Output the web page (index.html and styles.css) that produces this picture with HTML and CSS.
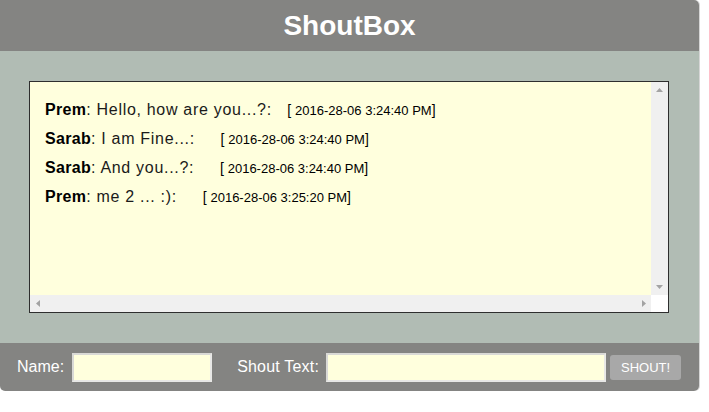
FILE: index.html
```html
<!DOCTYPE html>
<html>
<head>
<meta charset="utf-8">
<title>ShoutBox</title>
<link rel="stylesheet" href="styles.css">
</head>
<body>
<div class="shoutbox">
  <header class="sb-header"><h1>ShoutBox</h1></header>
  <main class="sb-body">
    <div class="sb-log">
      <div class="sb-messages">
        <div class="msg"><b>Prem</b>: Hello, how are you...?:&nbsp;&nbsp;&nbsp;<span class="time">[ <span class="ts">2016-28-06 3:24:40 PM</span>]</span></div>
        <div class="msg"><b>Sarab</b>: I am Fine...:&nbsp;&nbsp;&nbsp;&nbsp;&nbsp;<span class="time">[ <span class="ts">2016-28-06 3:24:40 PM</span>]</span></div>
        <div class="msg"><b>Sarab</b>: And you...?:&nbsp;&nbsp;&nbsp;&nbsp;&nbsp;<span class="time">[ <span class="ts">2016-28-06 3:24:40 PM</span>]</span></div>
        <div class="msg"><b>Prem</b>: me 2 ... :):&nbsp;&nbsp;&nbsp;&nbsp;&nbsp;<span class="time">[ <span class="ts">2016-28-06 3:25:20 PM</span>]</span></div>
      </div>
      <div class="vbar">
        <svg class="arrow" width="7" height="4" viewBox="0 0 7 4"><path d="M3.5 0 L7 4 L0 4 Z"/></svg>
        <svg class="arrow" width="7" height="4" viewBox="0 0 7 4"><path d="M0 0 L7 0 L3.5 4 Z"/></svg>
      </div>
      <div class="hbar">
        <svg class="arrow" width="4" height="7" viewBox="0 0 4 7"><path d="M0 3.5 L4 0 L4 7 Z"/></svg>
        <svg class="arrow" width="4" height="7" viewBox="0 0 4 7"><path d="M0 0 L4 3.5 L0 7 Z"/></svg>
      </div>
      <div class="corner"></div>
    </div>
  </main>
  <footer class="sb-footer">
    <label class="lbl" for="name">Name:</label>
    <input class="inp inp-name" id="name" type="text">
    <label class="lbl lbl-shout" for="shout">Shout Text:</label>
    <input class="inp inp-shout" id="shout" type="text">
    <button class="btn" type="button">SHOUT!</button>
  </footer>
</div>
</body>
</html>
```
FILE: styles.css
```css
html, body {
  margin: 0;
  padding: 0;
  background: #ffffff;
}

.shoutbox {
  width: 699px;
  font-family: "Liberation Sans", Arial, sans-serif;
  border-radius: 0 5px 5px 5px;
  overflow: hidden;
  box-shadow: 1px 0 0 #d6d6d6;
}

.sb-header {
  background: #848482;
  height: 51px;
  display: flex;
  align-items: center;
  justify-content: center;
}

.sb-header h1 {
  margin: 0;
  color: #ffffff;
  font-size: 28px;
  font-weight: bold;
  line-height: 1;
  padding-top: 1px;
}

.sb-body {
  background: #b1bcb4;
  padding: 30px 30px 30px 29px;
}

.sb-log {
  height: 232px;
  box-sizing: border-box;
  border: 1px solid #2e2e2e;
  background: #ffffdd;
  display: grid;
  grid-template-columns: 1fr 17px;
  grid-template-rows: 1fr 17px;
}

.sb-messages {
  padding: 14px 0 0 15px;
  font-size: 16px;
  line-height: 28px;
  color: #1a1a1a;
  letter-spacing: 0.7px;
}

.msg b {
  color: #000;
  letter-spacing: 0.3px;
}

.time {
  color: #000;
  font-size: 14px;
  letter-spacing: 0;
}

.ts {
  font-size: 13px;
}

.vbar {
  background: #f0f0f0;
  display: flex;
  flex-direction: column;
  align-items: center;
  justify-content: space-between;
  padding: 6px 0 6px 0;
}

.hbar {
  background: #f0f0f0;
  display: flex;
  align-items: center;
  justify-content: space-between;
  padding: 0 5px 0 6px;
}

.arrow {
  fill: #a3a3a3;
  display: block;
}

.corner {
  background: #ffffff;
}

.sb-footer {
  background: #848482;
  height: 48px;
  display: flex;
  align-items: center;
  padding-left: 17px;
}

.lbl {
  color: #ffffff;
  font-size: 16px;
}

.lbl-shout {
  margin-left: 25px;
  letter-spacing: 0.2px;
}

.inp {
  box-sizing: border-box;
  height: 29px;
  background: #ffffdd;
  border: 2px solid #d9d9d6;
  border-right-color: #e8e8e6;
  border-bottom-color: #e8e8e6;
  padding: 0 4px;
  font-family: inherit;
  font-size: 14px;
  margin: 0;
}

.inp-name {
  width: 140px;
  margin-left: 8px;
}

.inp-shout {
  width: 280px;
  margin-left: 7px;
}

.btn {
  margin-left: 4px;
  width: 71px;
  height: 25px;
  background: #a8a8a8;
  border: none;
  border-radius: 3px;
  color: #ffffff;
  font-family: inherit;
  font-size: 13px;
  padding: 0;
}
```
